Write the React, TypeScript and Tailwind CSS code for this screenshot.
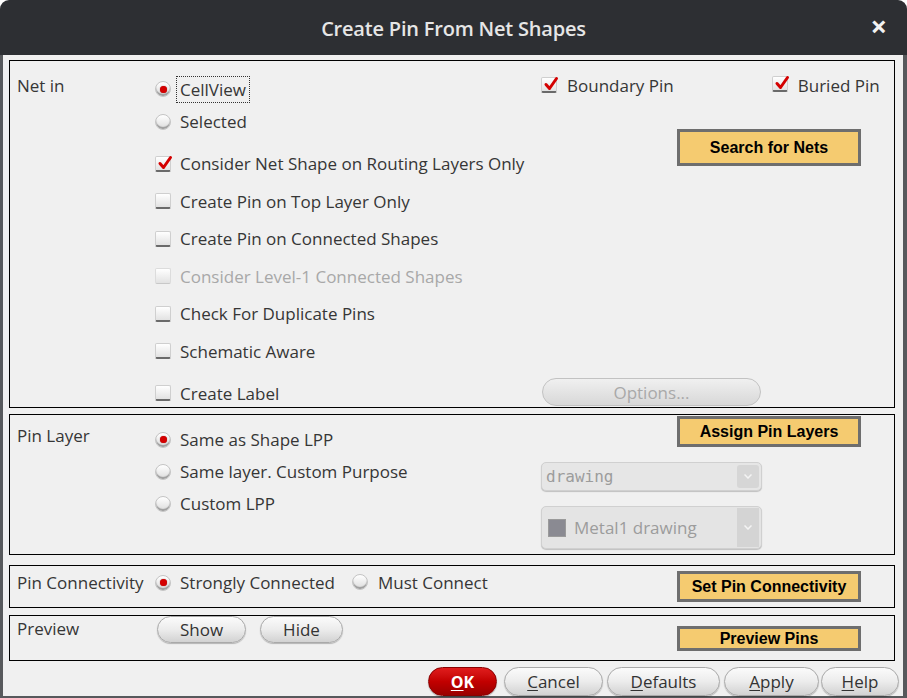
import React from "react";

function Radio({ on }: { on?: boolean }) {
  return (
    <span className="inline-flex w-[16px] h-[16px] shrink-0 items-center justify-center rounded-full border border-[#c4c4c4] bg-linear-to-b from-[#ffffff] to-[#dcdcdc] shadow-[inset_0_-2px_1px_rgba(0,0,0,0.3)]">
      {on && <span className="w-[7px] h-[7px] rounded-full bg-[#d40000] shadow-[0_0_1px_rgba(120,0,0,0.8)]" />}
    </span>
  );
}

function Check({ on, disabled }: { on?: boolean; disabled?: boolean }) {
  return (
    <span
      className={
        "relative inline-flex w-[16px] h-[16px] shrink-0 rounded-[2px] border bg-linear-to-b from-[#ffffff] to-[#e2e2e2] " +
        (disabled
          ? "border-[#dcdcdc] border-b-[#c8c8c8]"
          : "border-[#cfcfcf] border-b-[2px] border-b-[#6a6a6a]")
      }
    >
      {on && (
        <svg viewBox="0 0 16 16" className="absolute left-[1px] top-[-2px] w-[16px] h-[16px]">
          <path d="M3 8.5 L6.5 12.5 L13.5 2.5" fill="none" stroke="#d40000" strokeWidth="3" strokeLinecap="round" strokeLinejoin="round" />
        </svg>
      )}
    </span>
  );
}

function Note({ children, className = "" }: { children: React.ReactNode; className?: string }) {
  return (
    <div
      className={
        "flex shrink-0 items-center justify-center w-[184px] bg-[#f5cb70] border-[3px] border-[#6e6e6e] font-['Liberation_Sans',Arial,sans-serif] font-bold text-[16px] text-black " +
        className
      }
    >
      {children}
    </div>
  );
}

function Pill({ children, className = "" }: { children: React.ReactNode; className?: string }) {
  return (
    <div
      className={
        "flex shrink-0 items-center justify-center rounded-full border border-[#a9a9a9] bg-linear-to-b from-[#fbfbfb] via-[#ececec] to-[#d2d2d2] shadow-[0_1px_1px_rgba(0,0,0,0.25)] text-[#333] text-[17px] " +
        className
      }
    >
      {children}
    </div>
  );
}

export default function App() {
  return (
    <div className="w-[907px] h-[698px] bg-white font-['Open_Sans','Noto_Sans',sans-serif] text-[17px] text-[#363636] leading-none">
      <div className="w-[907px] h-[698px] flex flex-col">
        {/* Title bar */}
        <div className="relative h-[55px] shrink-0 rounded-t-[9px] bg-[#2d2f33] flex items-center justify-center">
          <span className="text-[20px] font-semibold text-[#e6e6e6] tracking-[-0.2px] mt-[2px]">Create Pin From Net Shapes</span>
          <span className="absolute right-[20px] top-[11px] text-[29px] font-bold text-[#f2f2f2]">×</span>
        </div>

        {/* Body */}
        <div className="flex-1 flex flex-col bg-[#f0f0f0] border-l-[3px] border-r-[4px] border-b-[2px] border-[#57595c] pl-[6px] pr-[8px] pt-[5px]">
          {/* Section 1 */}
          <div className="h-[348px] shrink-0 border border-black flex">
            <div className="w-[145px] shrink-0 pl-[7px] pt-[16px]">Net in</div>
            <div className="w-[386px] shrink-0 flex flex-col">
              <div className="h-[32px] shrink-0 mt-[12px] flex items-center">
                <Radio on />
                <span className="ml-[5px] px-[3px] py-[4px] border border-dotted border-[#333]">CellView</span>
              </div>
              <div className="h-[33px] shrink-0 flex items-center gap-[9px]">
                <Radio />
                <span>Selected</span>
              </div>
              <div className="mt-[7px] shrink-0 flex flex-col">
                {[
                  ["Consider Net Shape on Routing Layers Only", true, false],
                  ["Create Pin on Top Layer Only", false, false],
                  ["Create Pin on Connected Shapes", false, false],
                  ["Consider Level-1 Connected Shapes", false, true],
                  ["Check For Duplicate Pins", false, false],
                  ["Schematic Aware", false, false],
                ].map(([label, on, dis]) => (
                  <div key={label as string} className="h-[37.5px] shrink-0 flex items-center gap-[9px]">
                    <Check on={on as boolean} disabled={dis as boolean} />
                    <span className={dis ? "text-[#a8a8a8]" : ""}>{label as string}</span>
                  </div>
                ))}
                <div className="h-[26px] shrink-0 mt-[10px] flex items-center gap-[9px]">
                  <Check />
                  <span>Create Label</span>
                </div>
              </div>
            </div>
            <div className="flex-1 flex flex-col">
              <div className="h-[26px] shrink-0 mt-[11px] flex items-center">
                <Check on />
                <span className="ml-[10px]">Boundary Pin</span>
                <span className="ml-[98px]"><Check on /></span>
                <span className="ml-[10px]">Buried Pin</span>
              </div>
              <Note className="ml-[136px] mt-[31px] h-[37px]">Search for Nets</Note>
              <div className="mt-[212px] ml-[1px] shrink-0 w-[219px] h-[28px] rounded-full border border-[#c2c2c2] bg-linear-to-b from-[#f0f0f0] to-[#d8d8d8] flex items-center justify-center text-[#a9a9a9]">
                Options...
              </div>
            </div>
          </div>

          {/* Section 2 */}
          <div className="h-[141px] shrink-0 mt-[6px] border border-black flex">
            <div className="w-[145px] shrink-0 pl-[7px] pt-[12px]">Pin Layer</div>
            <div className="w-[386px] shrink-0 flex flex-col pt-[16px] gap-[15px]">
              <div className="flex items-center gap-[9px]">
                <Radio on />
                <span>Same as Shape LPP</span>
              </div>
              <div className="flex items-center gap-[9px]">
                <Radio />
                <span>Same layer. Custom Purpose</span>
              </div>
              <div className="flex items-center gap-[9px]">
                <Radio />
                <span>Custom LPP</span>
              </div>
            </div>
            <div className="flex-1 flex flex-col">
              <Note className="ml-[136px] mt-[1px] h-[31px]">Assign Pin Layers</Note>
              <div className="mt-[15px] shrink-0 w-[221px] h-[29px] rounded-[5px] border border-[#d0d0d0] bg-[#e6e6e6] shadow-[0_1px_1px_rgba(0,0,0,0.2)] flex">
                <span className="flex-1 flex items-center pl-[4px] font-['DejaVu_Sans_Mono',monospace] text-[16px] text-[#9c9c9c]">drawing</span>
                <span className="w-[22px] m-[2px] rounded-[3px] bg-[#d6d6d6] flex items-center justify-center">
                  <svg width="8" height="5" viewBox="0 0 8 5"><path d="M0.5 0.5 L4 4 L7.5 0.5" fill="none" stroke="#f4f4f4" strokeWidth="1.5" /></svg>
                </span>
              </div>
              <div className="mt-[15px] shrink-0 w-[221px] h-[43px] rounded-[5px] border border-[#d0d0d0] bg-[#e4e4e4] shadow-[0_1px_1px_rgba(0,0,0,0.2)] flex">
                <span className="flex-1 flex items-center pl-[6px] gap-[8px] text-[#9c9c9c]">
                  <span className="w-[18px] h-[18px] bg-[#8a8a92] border border-[#9a9a9a]" />
                  Metal1 drawing
                </span>
                <span className="w-[22px] my-[1px] mr-[2px] bg-[#d4d4d4] flex items-center justify-center">
                  <svg width="8" height="5" viewBox="0 0 8 5"><path d="M0.5 0.5 L4 4 L7.5 0.5" fill="none" stroke="#f4f4f4" strokeWidth="1.5" /></svg>
                </span>
              </div>
            </div>
          </div>

          {/* Section 3 */}
          <div className="h-[43px] shrink-0 mt-[10px] border border-black flex items-start">
            <div className="flex items-center h-[33px]">
              <span className="pl-[7px] w-[145px] shrink-0">Pin Connectivity</span>
              <Radio on />
              <span className="ml-[9px]">Strongly Connected</span>
              <span className="ml-[17px]"><Radio /></span>
              <span className="ml-[10px]">Must Connect</span>
            </div>
            <Note className="ml-auto mr-[33px] mt-[5px] h-[31px]">Set Pin Connectivity</Note>
          </div>

          {/* Section 4 */}
          <div className="h-[46px] shrink-0 mt-[7px] border border-black flex items-start">
            <span className="pl-[7px] w-[147px] shrink-0 pt-[4px]">Preview</span>
            <Pill className="w-[89px] h-[27px]">Show</Pill>
            <Pill className="w-[83px] h-[27px] ml-[14px]">Hide</Pill>
            <Note className="ml-auto mr-[33px] mt-[10px] h-[25px]">Preview Pins</Note>
          </div>

          {/* Buttons */}
          <div className="h-[29px] shrink-0 mt-[6px] flex -mr-[6px] pl-[419px]">
            <div className="w-[69px] h-[29px] shrink-0 rounded-full bg-linear-to-b from-[#e01c1c] via-[#c20000] to-[#9a0000] border border-[#8a0000] flex items-center justify-center text-white font-bold text-[16px] shadow-[0_1px_1px_rgba(0,0,0,0.3)]">
              <span><span className="underline underline-offset-2">O</span>K</span>
            </div>
            <Pill className="w-[99px] h-[29px] ml-[7px]"><span><span className="underline underline-offset-2">C</span>ancel</span></Pill>
            <Pill className="w-[113px] h-[29px] ml-[4px]"><span><span className="underline underline-offset-2">D</span>efaults</span></Pill>
            <Pill className="w-[95px] h-[29px] ml-[4px]"><span><span className="underline underline-offset-2">A</span>pply</span></Pill>
            <Pill className="w-[78px] h-[29px] ml-[2px]"><span><span className="underline underline-offset-2">H</span>elp</span></Pill>
          </div>
        </div>
      </div>
    </div>
  );
}
